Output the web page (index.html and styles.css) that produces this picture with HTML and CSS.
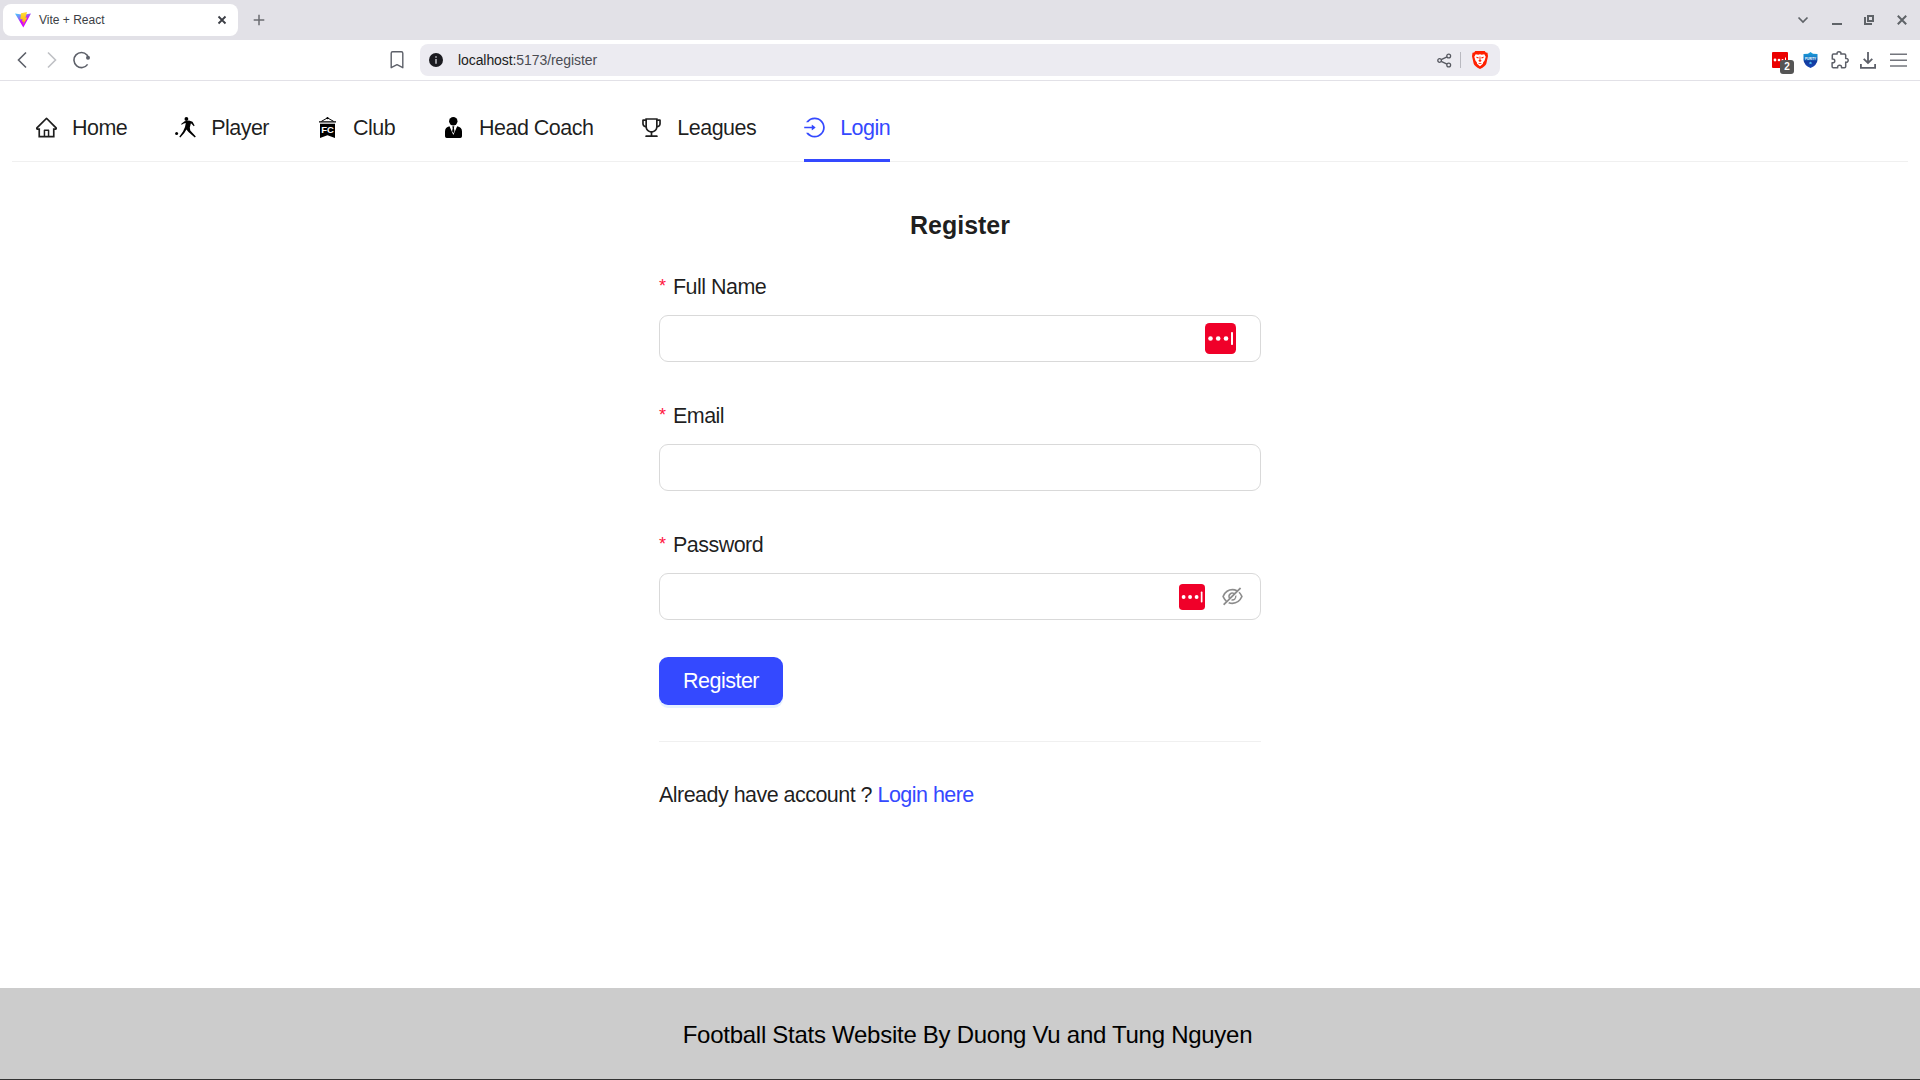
FILE: index.html
```html
<!DOCTYPE html>
<html lang="en">
<head>
<meta charset="utf-8">
<title>Vite + React</title>
<link rel="stylesheet" href="styles.css">
</head>
<body>
<header class="browser">
  <div class="tabstrip">
    <div class="tab">
      <svg class="favicon" width="16" height="16" viewBox="0 0 16 16">
        <defs>
          <linearGradient id="vite" x1="0" y1="0" x2="0.6" y2="1"><stop offset="0" stop-color="#41d1ff"/><stop offset=".4" stop-color="#8a6cf5"/><stop offset=".6" stop-color="#d400ff"/><stop offset="1" stop-color="#d010fe"/></linearGradient>
          <linearGradient id="bolt" x1="0" y1="0" x2="0" y2="1"><stop offset="0" stop-color="#ffe035"/><stop offset="1" stop-color="#ffa800"/></linearGradient>
        </defs>
        <path fill="url(#vite)" d="M0 1.500 8 2.800l8-1.300L8.300 15.600z"/>
        <path fill="url(#bolt)" d="M12 0 6 1.300l-.7 6 2.200-.3-.5 2.800 1.800-.4-.8 3.600 4.500-7.500-2 .3z"/>
      </svg>
      <span class="tab-title">Vite + React</span>
      <svg width="10" height="10" viewBox="0 0 10 10" fill="none" stroke="#3b3e45" stroke-width="1.8"><path d="m1.500 1.500 7 7m0-7-7 7"/></svg>
    </div>
    <svg class="newtab" width="12" height="12" viewBox="0 0 12 12" fill="none" stroke="#6b6c72" stroke-width="1.5"><path d="M6 .7v10.600M.7 6h10.600"/></svg>
    <div class="window-controls">
      <svg width="12" height="12" viewBox="0 0 12 12" fill="none" stroke="#5f6368" stroke-width="1.7"><path d="m1.500 3.500 4.500 4.500 4.500-4.500"/></svg>
      <svg width="10" height="12" viewBox="0 0 10 12" fill="#5f6368"><path d="M0 8h10v2H0z"/></svg>
      <svg width="10" height="10" viewBox="0 0 10 10" fill="none" stroke="#5f6368" stroke-width="2"><path d="M4 1h5v5H4zM1 2v7h7"/></svg>
      <svg width="10" height="10" viewBox="0 0 10 10" fill="none" stroke="#5f6368" stroke-width="2"><path d="m.8.8 8.400 8.400m0-8.400L.8 9.200"/></svg>
    </div>
  </div>
  <div class="toolbar">
    <div class="history">
      <svg width="10" height="18" viewBox="0 0 10 18" fill="none" stroke="#5d6069" stroke-width="1.6"><path d="m9 1.500-7.500 7.500L9 16.500"/></svg>
      <svg width="10" height="18" viewBox="0 0 10 18" fill="none" stroke="#bfc0c5" stroke-width="1.6"><path d="M1 1.500 8.500 9 1 16.500"/></svg>
      <svg width="18" height="18" viewBox="0 0 18 18" fill="none" stroke="#5d6069" stroke-width="1.600"><path d="M14.600 13.400A7.500 7.500 0 1 1 14 4l1.200 2.400"/><circle cx="15" cy="6.800" r="2" fill="#5d6069" stroke="none"/></svg>
    </div>
    <svg class="bookmark" width="14" height="18" viewBox="0 0 14 18" fill="none" stroke="#5d6069" stroke-width="1.400" stroke-linejoin="round"><path d="M1.200 2.200q0-1.400 1.400-1.400h8.800q1.400 0 1.400 1.400v14.500L7 13.700l-5.800 3z"/></svg>
    <div class="address">
      <svg width="14" height="14" viewBox="0 0 14 14"><circle cx="7" cy="7" r="7" fill="#1b1b20"/><path fill="#b8b8be" d="M6.200 3.300h1.600v1.500H6.200zM6.200 6h1.600v4.700H6.200z"/></svg>
      <span class="url">localhost:<span class="url-path">5173/register</span></span>
      <svg class="share" width="15" height="15" viewBox="0 0 15 15" fill="none" stroke="#55575f" stroke-width="1.300"><circle cx="2.600" cy="7.500" r="1.800"/><circle cx="11.700" cy="3" r="1.900"/><circle cx="11.700" cy="12" r="1.900"/><path d="m4.200 6.700 5.800-2.900M4.200 8.300l5.800 2.900"/></svg>
      <span class="separator"></span>
      <svg width="16" height="18" viewBox="0 0 16 18"><path fill="#ff2000" d="M3.300 0h9.400l1.200 1.500 1.600.3.500 3.500-1.700 7.400Q13.500 15.300 8 18 2.500 15.300 1.700 12.700L0 5.300l.5-3.500 1.600-.3z"/><path fill="#fff" d="m3.700 3.200 2.600.500L8 3.200l1.700.5 2.600-.5 1.400 2.600-1.200 4-1.300 1.400-.3 1.600L8 15.300l-2.900-2.500-.3-1.600-1.300-1.400-1.200-4z"/><path fill="#ff2000" d="m4 5.800 2.700.5-.3 1.100-1.600-.3zM12 5.800l-2.700.5.3 1.100 1.600-.3zM7.600 5.500h.8L8.600 9l1.200.8L8 11l-1.800-1.200L7.400 9zM5.800 12.300 8 11.900l2.200.4L8 13z"/></svg>
    </div>
    <div class="extensions">
      <div class="pass-ext">
        <svg width="16" height="16" viewBox="0 0 16 16"><rect width="16" height="16" rx="1" fill="#eb0000"/><g fill="#fff"><circle cx="3" cy="8" r="1.400"/><circle cx="7" cy="8" r="1.300"/><circle cx="10.500" cy="8" r="1"/><path d="M13 5.500h1v4h-1z"/></g></svg>
        <span class="count">2</span>
      </div>
      <svg width="15" height="16" viewBox="0 0 15 16"><defs><linearGradient id="purity" x1="0" y1="0" x2="0" y2="1"><stop offset="0" stop-color="#1ba4dc"/><stop offset=".4" stop-color="#1675c4"/><stop offset=".6" stop-color="#143a9e"/><stop offset="1" stop-color="#1746b5"/></linearGradient></defs><path fill="url(#purity)" d="M7.500 0 10 1.700l4.500.3v6q-.3 5-7 8-6.700-3-7-8V2L5 1.700z"/><text x="7.500" y="8" text-anchor="middle" class="shield-text">PURITY</text><path fill="#4fc6f2" d="m7.500 9.500.6 1h1l-.7.800.4 1-1.300-.6-1.300.6.400-1-.7-.8h1z"/></svg>
      <svg width="18" height="18" viewBox="0 0 18 18" fill="none" stroke="#5d6069" stroke-width="1.500" stroke-linejoin="round"><path d="M2.500 3h3.700C5.700 1.500 6.700.8 8 .8s2.400.8 1.800 2.200h3.700q1.200 0 1.200 1.200v3.300c1.500-.4 2.500.5 2.500 1.800s-1.100 2.300-2.500 1.800v4.500q0 1.200-1.200 1.200h-3c.3-1.800-.7-2.600-1.900-2.600s-2.300.8-1.900 2.600H2.300q-1.200 0-1.200-1.200v-3.800c1.800.3 2.700-.7 2.700-1.900S2.900 7.600 1.300 8V4.200Q1.300 3 2.500 3z"/></svg>
      <svg width="16" height="17" viewBox="0 0 16 17" fill="none" stroke="#5d6069" stroke-width="1.800"><path d="M8 0v11M3.700 6.800 8 11l4.300-4.200M.9 12v3.800h14.200V12"/></svg>
      <svg width="17" height="14" viewBox="0 0 17 14" fill="#73757c"><path d="M0 .500h17v1.500H0zM0 6.500h17V8H0zM0 12.200h17v1.500H0z"/></svg>
    </div>
  </div>
</header>

<div class="page">
  <nav class="menu">
    <a class="menu-item"><svg class="icon" viewBox="64 64 896 896" fill="currentColor"><path d="M946.5 505L560.1 118.800l-25.900-25.900a31.500 31.500 0 00-44.400 0L77.500 505a63.900 63.900 0 00-18.800 46c.4 35.200 29.700 63.300 64.900 63.300h42.500V940h691.800V614.300h43.400c17.100 0 33.200-6.700 45.300-18.800a63.600 63.600 0 0018.700-45.300c0-17-6.700-33.100-18.800-45.200zM568 868H456V664h112v204zm217.900-325.700V868H632V640c0-22.100-17.900-40-40-40H432c-22.100 0-40 17.900-40 40v228H238.100V542.300h-96l370-369.700 23.100 23.100L882 542.300h-96.100z"/></svg>Home</a>
    <a class="menu-item"><svg class="icon" viewBox="0 0 21 21"><circle cx="11.400" cy="2" r="1.900"/><circle cx="1.600" cy="16.500" r="1.500"/><path d="M9.600 4.300 14 3.400l3.500 1.400 2.100 3.700-.8.700-2.500-2.700-.5-.1-1 4.300.5 2.700 5.500 6.100-1 1-6.300-5.600-2.100-2.300-2.100 3.300-4 4.700-1-.9 3.700-5.300 2-4.500.8-3.900-2 .5-2.200 1.300-.5-.9z"/></svg>Player</a>
    <a class="menu-item"><svg class="icon" viewBox="0 0 21 21"><path fill="none" stroke="#000" stroke-width="1" d="m4.300 4.400 6.200-3.500 6.200 3.500"/><circle cx="10.500" cy="1.200" r="1.100"/><path d="M2 4.200h17v1.400H2zM3 6.700h15V21l-7.500-2.800L3 21z"/><text class="club-text" x="10.500" y="15.500" text-anchor="middle">FC</text></svg>Club</a>
    <a class="menu-item"><svg class="icon" viewBox="0 0 21 21"><circle cx="10.300" cy="4.200" r="4.200"/><path d="M6.500 9.300 10.300 18l3.900-8.700q4.800 1 4.800 5.200v4.800q0 1.700-1.700 1.700H3.700Q2 21 2 19.300v-4.800q0-4.200 4.500-5.200z"/><path d="M7.500 9.500h5.600l-2.800 7.500z" fill="#fff"/><path d="M9.300 9.300h2l-.4 2 .6 3-1.200 2-1.200-2 .6-3z"/></svg>Head Coach</a>
    <a class="menu-item"><svg class="icon" viewBox="64 64 896 896" fill="currentColor"><path d="M868 160h-92v-40c0-4.400-3.600-8-8-8H256c-4.400 0-8 3.600-8 8v40h-92a44 44 0 00-44 44v148c0 81.700 60 149.600 138.200 162C265.700 630.200 359 721.700 476 734.500v105.200H280c-17.700 0-32 14.300-32 32V904c0 4.400 3.600 8 8 8h512c4.400 0 8-3.600 8-8v-32.300c0-17.700-14.300-32-32-32H548V734.500C665 721.700 758.300 630.200 773.800 514 852 501.600 912 433.700 912 352V204a44 44 0 00-44-44zM184 352V232h64v207.600a91.990 91.990 0 01-64-87.600zm520 128c0 49.100-19.100 95.400-53.900 130.100-34.800 34.800-81 53.900-130.100 53.900h-16c-49.100 0-95.400-19.100-130.100-53.900-34.800-34.800-53.900-81-53.900-130.100V184h384v296zm136-128c0 41-26.900 75.800-64 87.600V232h64v120z"/></svg>Leagues</a>
    <a class="menu-item selected"><svg class="icon" viewBox="64 64 896 896" fill="currentColor"><path d="M521.7 82c-152.500-.4-286.700 78.500-363.400 197.700-3.400 5.300.4 12.300 6.700 12.300h70.300c4.800 0 9.300-2.100 12.300-5.800 7-8.500 14.500-16.700 22.400-24.500 32.600-32.500 70.500-58.100 112.700-75.900 43.600-18.400 90-27.800 137.900-27.800 47.900 0 94.300 9.300 137.900 27.800 42.200 17.800 80.100 43.400 112.700 75.900 32.600 32.500 58.100 70.400 76 112.500C865.700 417.800 875 464.100 875 512c0 47.900-9.400 94.200-27.800 137.800-17.800 42.100-43.400 80-76 112.500s-70.500 58.100-112.700 75.900A352.800 352.800 0 01520.600 866c-47.900 0-94.300-9.400-137.900-27.800A353.840 353.840 0 01270 762.300c-7.900-7.900-15.300-16.100-22.400-24.500-3-3.700-7.600-5.800-12.300-5.800H165c-6.300 0-10.200 7-6.700 12.300C234.900 863.200 368.500 942 520.600 942c236.200 0 428-190.100 430.400-425.600C953.400 277.100 761.300 82.600 521.700 82zM395.020 624v-76h-314c-4.400 0-8-3.600-8-8v-56c0-4.400 3.600-8 8-8h314v-76c0-6.700 7.800-10.500 13-6.300l141.900 112a8 8 0 010 12.600l-141.900 112c-5.200 4.100-13 .4-13-6.300z"/></svg>Login</a>
  </nav>

  <main class="register">
    <h3 class="title">Register</h3>
    <div class="field">
      <div class="label"><span class="required">*</span>Full Name</div>
      <div class="input name-input"><svg width="31" height="31" viewBox="0 0 31 31"><rect width="31" height="31" rx="4.500" fill="#f00029"/><g fill="#fff"><circle cx="5.500" cy="15.500" r="2.300"/><circle cx="13.200" cy="15.500" r="2.300"/><circle cx="21" cy="15.500" r="2.300"/><rect x="26" y="9" width="2" height="13" rx=".8"/></g></svg></div>
    </div>
    <div class="field">
      <div class="label"><span class="required">*</span>Email</div>
      <div class="input"></div>
    </div>
    <div class="field">
      <div class="label"><span class="required">*</span>Password</div>
      <div class="input password-input">
        <svg width="26" height="26" viewBox="0 0 31 31"><rect width="31" height="31" rx="4.500" fill="#f00029"/><g fill="#fff"><circle cx="5.500" cy="15.500" r="2.300"/><circle cx="13.200" cy="15.500" r="2.300"/><circle cx="21" cy="15.500" r="2.300"/><rect x="26" y="9" width="2" height="13" rx=".8"/></g></svg>
        <svg class="eye" viewBox="64 64 896 896" fill="currentColor"><path d="M942.2 486.200Q889.470 375.110 816.700 305l-50.880 50.880C807.310 395.530 843.450 447.400 874.700 512 791.500 684.200 673.400 766 512 766q-72.670 0-133.870-22.380L323 798.750Q408 838 512 838q288.300 0 430.200-300.300a60.290 60.290 0 000-51.500zm-63.570-320.640L836 122.880a8 8 0 00-11.320 0L715.310 232.200Q624.860 186 512 186q-288.300 0-430.200 300.300a60.300 60.300 0 000 51.500q56.690 119.400 136.500 191.410L112.480 835a8 8 0 000 11.310L155.170 889a8 8 0 0011.310 0l712.150-712.120a8 8 0 000-11.320zM149.300 512C232.600 339.800 350.700 258 512 258c54.540 0 104.130 9.360 149.120 28.390l-70.300 70.300a176 176 0 00-238.130 238.130l-83.420 83.420C223.100 637.490 183.300 582.280 149.300 512zm246.700 0a112.110 112.110 0 01146.200-106.690L401.310 546.200A112 112 0 01396 512z"/><path d="M508 624c-3.460 0-6.870-.16-10.250-.47l-52.820 52.820a176.090 176.090 0 00227.420-227.420l-52.820 52.820c.31 3.380.47 6.790.47 10.250a111.940 111.940 0 01-112 112z"/></svg>
      </div>
    </div>
    <button class="submit" type="button">Register</button>
    <div class="divider"></div>
    <p class="prompt">Already have account ? <a class="link">Login here</a></p>
  </main>
</div>

<footer class="footer">Football Stats Website By Duong Vu and Tung Nguyen</footer>
</body>
</html>
```
FILE: styles.css
```css
* { box-sizing: border-box; }

body {
  margin: 0;
  height: 1080px;
  overflow: hidden;
  display: flex;
  flex-direction: column;
  background: #fff;
  color: rgba(0, 0, 0, 0.88);
  font-family: "Liberation Sans", Arial, sans-serif;
  font-size: 21.5px;
  letter-spacing: -0.53px;
}

svg { display: block; flex: none; }

/* Browser chrome */
.browser { flex: none; border-bottom: 1px solid #e2e1e7; letter-spacing: 0; }

.tabstrip {
  height: 40px;
  display: flex;
  align-items: center;
  padding: 0 13px 0 3px;
  background: #e2e1e7;
}

.tab {
  width: 235px;
  height: 32px;
  display: flex;
  align-items: center;
  padding: 0 11px 0 12px;
  border-radius: 8px;
  background: #fff;
}

.tab-title { flex: 1; margin-left: 8px; font-size: 12px; color: #3b3e45; }
.newtab { margin-left: 15px; }

.window-controls {
  margin-left: auto;
  display: flex;
  align-items: center;
}
.window-controls svg:nth-child(2) { margin-left: 23px; margin-top: 2px; }
.window-controls svg:nth-child(3) { margin-left: 22px; }
.window-controls svg:nth-child(4) { margin-left: 23px; }

.toolbar {
  height: 40px;
  display: flex;
  align-items: center;
  padding: 0 13px 0 17px;
}

.history { display: flex; align-items: center; gap: 20px; }
.history svg:last-child { margin-left: -4px; }
.bookmark { margin-left: 299px; }

.address {
  width: 1080px;
  height: 32px;
  margin-left: 16px;
  padding: 0 12px 0 9px;
  display: flex;
  align-items: center;
  border-radius: 8px;
  background: #ecebf1;
}
.url { flex: 1; margin-left: 15px; font-size: 14px; letter-spacing: -0.08px; color: #1b1b20; }
.url-path { color: #4b4c53; }
.separator { width: 1px; height: 16px; margin: 0 11px 0 8px; background: #b9b9c0; }

.extensions {
  flex: 1;
  display: flex;
  align-items: center;
  justify-content: flex-end;
}
.extensions > svg:nth-child(2) { margin-left: 15px; }
.extensions > svg:nth-child(3) { margin-left: 13px; }
.extensions > svg:nth-child(4) { margin-left: 11px; }
.extensions > svg:nth-child(5) { margin-left: 14px; }
.shield-text { font-size: 3px; font-weight: bold; fill: #fff; }

.pass-ext { position: relative; }
.count {
  position: absolute;
  left: 8px;
  top: 8px;
  width: 14px;
  height: 14px;
  border-radius: 3px;
  background: #555;
  color: #fff;
  font-size: 10px;
  font-weight: bold;
  line-height: 14px;
  text-align: center;
}

/* Page */
.page { flex: 1; padding: 12px 12px 0; }

.menu {
  height: 69px;
  display: flex;
  border-bottom: 1px solid #f0f0f0;
}

.menu-item {
  position: relative;
  height: 69px;
  display: flex;
  align-items: center;
  gap: 15px;
  padding: 2px 24px 0;
}

.icon { width: 21px; height: 21px; margin-bottom: 2px; }
.club-text { font-size: 9.5px; font-weight: bold; letter-spacing: 0; fill: #fff; }

.selected { color: #3449ff; letter-spacing: -0.5px; }
.selected::after {
  content: "";
  position: absolute;
  left: 24px;
  right: 24px;
  bottom: 0;
  height: 3px;
  background: #3449ff;
}

.register { width: 602px; margin: 0 auto; padding-top: 48px; }

.title {
  margin: 0 0 27px;
  font-size: 25px;
  line-height: 31px;
  letter-spacing: 0;
  text-align: center;
}

.field { height: 129px; }

.label {
  height: 33px;
  padding-top: 5px;
  display: flex;
  align-items: center;
}
.required {
  width: 8px;
  height: 24px;
  margin-right: 6px;
  color: #ff1340;
  font-size: 18px;
  line-height: 22px;
}

.input {
  height: 47px;
  margin-top: 14px;
  display: flex;
  align-items: center;
  justify-content: flex-end;
  border: 1px solid #d9d9d9;
  border-radius: 9px;
}
.name-input { padding-right: 24px; }
.password-input { padding-right: 17px; gap: 17px; }
.eye { width: 21px; height: 21px; color: rgba(0, 0, 0, 0.45); }

.submit {
  display: block;
  width: 124px;
  height: 48px;
  margin-top: 2px;
  padding: 0;
  border: 0;
  border-radius: 9px;
  background: #3449ff;
  box-shadow: 0 3px 0 #e6f1ff;
  color: #fff;
  font: inherit;
  letter-spacing: -0.5px;
}

.divider { height: 1px; margin: 36px 0; background: #f0f0f0; }

.prompt { margin: 0; line-height: 35px; }
.link { color: #3449ff; }

.footer {
  flex: none;
  height: 92px;
  padding: 3px 0 0 15px;
  display: flex;
  align-items: center;
  justify-content: center;
  border-bottom: 1px solid #333;
  background: #ccc;
  color: #000;
  font-size: 24px;
  letter-spacing: -0.27px;
}
```
